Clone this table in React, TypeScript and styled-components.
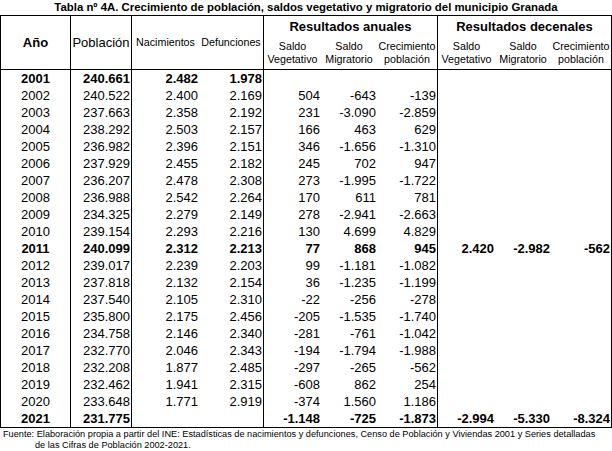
import React from "react";
import styled, { createGlobalStyle } from "styled-components";

const Global = createGlobalStyle`
  html, body { margin: 0; padding: 0; background: #fff; }
  body { font-family: "Liberation Sans", Arial, sans-serif; color: #000; }
`;

const COLS = "70px 61px 67px 65px 57px 56px 61px 57px 56px 60px";

const Page = styled.div`
  width: 612px;
  display: flex;
  flex-direction: column;
`;

const Title = styled.div`
  height: 15px;
  line-height: 15px;
  font-size: 11.4px;
  font-weight: bold;
  text-align: center;
`;

const Table = styled.div`
  border: 1px solid #000;
  display: flex;
  flex-direction: column;
`;

const Header = styled.div`
  display: grid;
  grid-template-columns: ${COLS};
  grid-template-rows: 21px 32px;
  border-bottom: 1px solid #000;
`;

const HCell = styled.div<{ $col: string; $row: string; $size: number; $bold?: boolean; $br?: boolean; $align?: string }>`
  grid-column: ${(p) => p.$col};
  grid-row: ${(p) => p.$row};
  display: flex;
  align-items: center;
  justify-content: ${(p) => p.$align || "center"};
  text-align: center;
  font-size: ${(p) => p.$size}px;
  font-weight: ${(p) => (p.$bold ? "bold" : "normal")};
  line-height: 13px;
  border-right: ${(p) => (p.$br ? "1px solid #000" : "none")};
  white-space: nowrap;
`;

const Row = styled.div`
  display: grid;
  grid-template-columns: ${COLS};
  height: 17px;
`;

const Cell = styled.div<{ $bold?: boolean; $br?: boolean; $center?: boolean }>`
  font-size: 13px;
  line-height: 17px;
  font-weight: ${(p) => (p.$bold ? "bold" : "normal")};
  text-align: ${(p) => (p.$center ? "center" : "right")};
  padding-right: ${(p) => (p.$center ? "0" : "1px")};
  border-right: ${(p) => (p.$br ? "1px solid #000" : "none")};
  white-space: nowrap;
`;

const Footer = styled.div`
  font-size: 9.2px;
  line-height: 11px;
  padding-top: 1px;
  padding-left: 3px;
`;

const FootLine = styled.div<{ $indent?: boolean }>`
  padding-left: ${(p) => (p.$indent ? "32px" : "0")};
  white-space: nowrap;
`;

type R = { y: string; v: string[]; bold?: boolean };

const rows: R[] = [
  { y: "2001", v: ["240.661", "2.482", "1.978", "", "", "", "", "", ""], bold: true },
  { y: "2002", v: ["240.522", "2.400", "2.169", "504", "-643", "-139", "", "", ""] },
  { y: "2003", v: ["237.663", "2.358", "2.192", "231", "-3.090", "-2.859", "", "", ""] },
  { y: "2004", v: ["238.292", "2.503", "2.157", "166", "463", "629", "", "", ""] },
  { y: "2005", v: ["236.982", "2.396", "2.151", "346", "-1.656", "-1.310", "", "", ""] },
  { y: "2006", v: ["237.929", "2.455", "2.182", "245", "702", "947", "", "", ""] },
  { y: "2007", v: ["236.207", "2.478", "2.308", "273", "-1.995", "-1.722", "", "", ""] },
  { y: "2008", v: ["236.988", "2.542", "2.264", "170", "611", "781", "", "", ""] },
  { y: "2009", v: ["234.325", "2.279", "2.149", "278", "-2.941", "-2.663", "", "", ""] },
  { y: "2010", v: ["239.154", "2.293", "2.216", "130", "4.699", "4.829", "", "", ""] },
  { y: "2011", v: ["240.099", "2.312", "2.213", "77", "868", "945", "2.420", "-2.982", "-562"], bold: true },
  { y: "2012", v: ["239.017", "2.239", "2.203", "99", "-1.181", "-1.082", "", "", ""] },
  { y: "2013", v: ["237.818", "2.132", "2.154", "36", "-1.235", "-1.199", "", "", ""] },
  { y: "2014", v: ["237.540", "2.105", "2.310", "-22", "-256", "-278", "", "", ""] },
  { y: "2015", v: ["235.800", "2.175", "2.456", "-205", "-1.535", "-1.740", "", "", ""] },
  { y: "2016", v: ["234.758", "2.146", "2.340", "-281", "-761", "-1.042", "", "", ""] },
  { y: "2017", v: ["232.770", "2.046", "2.343", "-194", "-1.794", "-1.988", "", "", ""] },
  { y: "2018", v: ["232.208", "1.877", "2.485", "-297", "-265", "-562", "", "", ""] },
  { y: "2019", v: ["232.462", "1.941", "2.315", "-608", "862", "254", "", "", ""] },
  { y: "2020", v: ["233.648", "1.771", "2.919", "-374", "1.560", "1.186", "", "", ""] },
  { y: "2021", v: ["231.775", "", "", "-1.148", "-725", "-1.873", "-2.994", "-5.330", "-8.324"], bold: true },
];

// indexes in v[] followed by a vertical rule
const ruleAfter = new Set([0, 2, 5]);

export default function App() {
  return (
    <Page>
      <Global />
      <Title>Tabla nº 4A. Crecimiento de población, saldos vegetativo y migratorio del municipio Granada</Title>
      <Table>
        <Header>
          <HCell $col="1" $row="1 / 3" $size={13} $bold $br>Año</HCell>
          <HCell $col="2" $row="1 / 3" $size={13} $br>Población</HCell>
          <HCell $col="3" $row="1 / 3" $size={10.7}>Nacimientos</HCell>
          <HCell $col="4" $row="1 / 3" $size={10.7} $br>Defunciones</HCell>
          <HCell $col="5 / 8" $row="1" $size={13} $bold $br>Resultados anuales</HCell>
          <HCell $col="8 / 11" $row="1" $size={13} $bold>Resultados decenales</HCell>
          <HCell $col="5" $row="2" $size={10.7}>Saldo<br />Vegetativo</HCell>
          <HCell $col="6" $row="2" $size={10.7}>Saldo<br />Migratorio</HCell>
          <HCell $col="7" $row="2" $size={10.7} $br>Crecimiento<br />población</HCell>
          <HCell $col="8" $row="2" $size={10.7}>Saldo<br />Vegetativo</HCell>
          <HCell $col="9" $row="2" $size={10.7}>Saldo<br />Migratorio</HCell>
          <HCell $col="10" $row="2" $size={10.7}>Crecimiento<br />población</HCell>
        </Header>
        {rows.map((r) => (
          <Row key={r.y}>
            <Cell $center $bold={r.bold} $br>{r.y}</Cell>
            {r.v.map((val, i) => (
              <Cell key={i} $bold={r.bold} $br={ruleAfter.has(i)}>{val}</Cell>
            ))}
          </Row>
        ))}
      </Table>
      <Footer>
        <FootLine>Fuente: Elaboración propia a partir del INE: Estadísticas de nacimientos y defunciones, Censo de Población y Viviendas 2001 y Series detalladas</FootLine>
        <FootLine $indent>de las Cifras de Población 2002-2021.</FootLine>
      </Footer>
    </Page>
  );
}
